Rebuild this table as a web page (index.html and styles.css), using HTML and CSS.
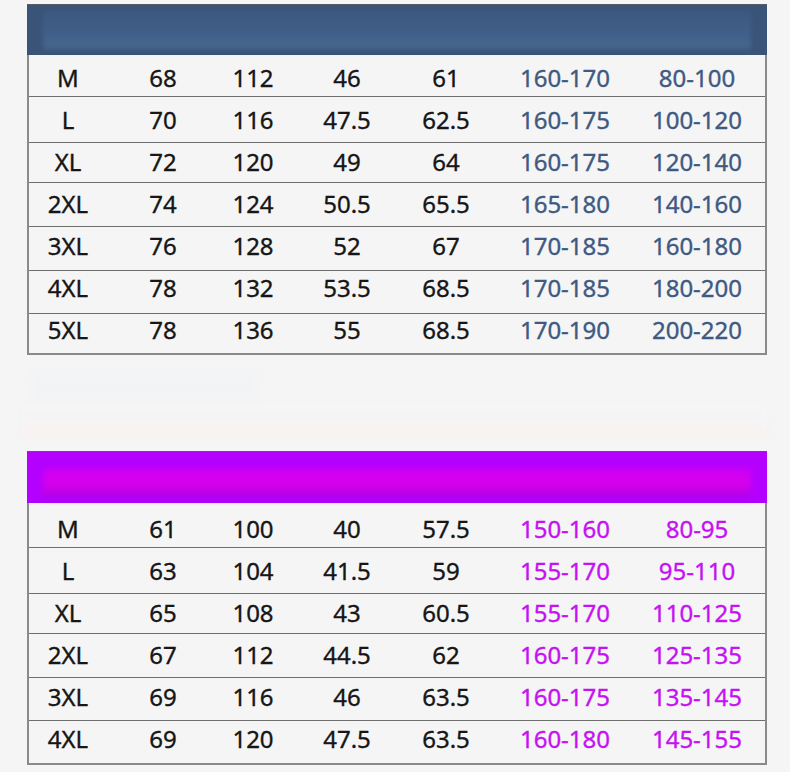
FILE: index.html
```html
<!DOCTYPE html>
<html lang="zh">
<head>
<meta charset="utf-8">
<title>Size chart</title>
<link rel="stylesheet" href="styles.css">
</head>
<body>
<main class="page">
  <section class="chart chart-blue">
    <div class="chart-head"><div class="glow"></div></div>
    <div class="rows">
      <div class="row"><span>M</span><span>68</span><span>112</span><span>46</span><span>61</span><span class="hl">160-170</span><span class="hl">80-100</span></div>
      <div class="row"><span>L</span><span>70</span><span>116</span><span>47.5</span><span>62.5</span><span class="hl">160-175</span><span class="hl">100-120</span></div>
      <div class="row"><span>XL</span><span>72</span><span>120</span><span>49</span><span>64</span><span class="hl">160-175</span><span class="hl">120-140</span></div>
      <div class="row"><span>2XL</span><span>74</span><span>124</span><span>50.5</span><span>65.5</span><span class="hl">165-180</span><span class="hl">140-160</span></div>
      <div class="row"><span>3XL</span><span>76</span><span>128</span><span>52</span><span>67</span><span class="hl">170-185</span><span class="hl">160-180</span></div>
      <div class="row"><span>4XL</span><span>78</span><span>132</span><span>53.5</span><span>68.5</span><span class="hl">170-185</span><span class="hl">180-200</span></div>
      <div class="row"><span>5XL</span><span>78</span><span>136</span><span>55</span><span>68.5</span><span class="hl">170-190</span><span class="hl">200-220</span></div>
    </div>
  </section>

  <div class="ghost">
    <div class="ghost-box"></div>
    <div class="ghost-band"></div>
  </div>

  <section class="chart chart-violet">
    <div class="chart-head"><div class="glow"></div></div>
    <div class="rows">
      <div class="row"><span>M</span><span>61</span><span>100</span><span>40</span><span>57.5</span><span class="hl">150-160</span><span class="hl">80-95</span></div>
      <div class="row"><span>L</span><span>63</span><span>104</span><span>41.5</span><span>59</span><span class="hl">155-170</span><span class="hl">95-110</span></div>
      <div class="row"><span>XL</span><span>65</span><span>108</span><span>43</span><span>60.5</span><span class="hl">155-170</span><span class="hl">110-125</span></div>
      <div class="row"><span>2XL</span><span>67</span><span>112</span><span>44.5</span><span>62</span><span class="hl">160-175</span><span class="hl">125-135</span></div>
      <div class="row"><span>3XL</span><span>69</span><span>116</span><span>46</span><span>63.5</span><span class="hl">160-175</span><span class="hl">135-145</span></div>
      <div class="row"><span>4XL</span><span>69</span><span>120</span><span>47.5</span><span>63.5</span><span class="hl">160-180</span><span class="hl">145-155</span></div>
    </div>
  </section>
</main>
</body>
</html>
```

FILE: styles.css
```css
html, body {
  margin: 0;
  padding: 0;
  background: #f5f5f5;
}

body {
  width: 790px;
  height: 772px;
  overflow: hidden;
  font-family: "Noto Sans", "Open Sans", "Noto Sans CJK SC", sans-serif;
  color: #161616;
}

.page {
  display: flex;
  flex-direction: column;
  padding: 4px 0 0 27px;
}

.chart {
  width: 740px;
  display: flex;
  flex-direction: column;
}

.chart-head {
  height: 51px;
  box-sizing: border-box;
  border-top: 1px solid #5a5a66;
  padding: 6px 16px 5px 16px;
  display: flex;
}

.glow {
  flex: 1;
  border-radius: 2px;
  filter: blur(2px);
}

.chart-blue .chart-head {
  background: #3a5479;
}

.chart-blue .glow {
  background: linear-gradient(180deg, #3c5980 0%, #40608a 60%, #47678d 90%, #3e5c83 100%);
}

.chart-violet .chart-head {
  height: 52px;
  background: #b400ff;
}

.chart-violet .glow {
  margin-top: 10px;
  background: linear-gradient(180deg, #c800f6 0%, #d800ee 35%, #d000e8 65%, #a400e8 100%);
  filter: blur(3px);
}

.rows {
  display: grid;
  border: 2px solid #8a8a8a;
  border-top: 0;
  background: #f5f5f5;
}

.chart-blue .rows {
  grid-template-rows: 42px 46px 40px 44px 44px 43px 39px;
}

.chart-violet .rows {
  grid-template-rows: 45px 46px 40px 44px 43px 42px;
}

.row {
  display: grid;
  grid-template-columns: 78px 112px 68px 120px 78px 160px 104px 1fr;
  align-items: center;
  box-sizing: border-box;
  border-bottom: 1px solid #6e6e6e;
  font-size: 24px;
  line-height: 1;
  -webkit-text-stroke: 0.35px currentColor;
}

.row:last-child {
  border-bottom: 0;
}

.row span {
  text-align: center;
  white-space: nowrap;
}

/* fine vertical placement of the text within the uneven rows */
.chart-blue .row:nth-child(1) { padding-top: 4px; }
.chart-blue .row:nth-child(3) { padding-bottom: 2px; }
.chart-blue .row:nth-child(4) { padding-bottom: 2px; }
.chart-blue .row:nth-child(5) { padding-bottom: 6px; }
.chart-blue .row:nth-child(6) { padding-bottom: 9px; }
.chart-blue .row:nth-child(7) { padding-bottom: 7px; }

.chart-violet .row:nth-child(1) { padding-top: 7px; }
.chart-violet .row:nth-child(3) { padding-bottom: 2px; }
.chart-violet .row:nth-child(4) { padding-bottom: 2px; }
.chart-violet .row:nth-child(5) { padding-bottom: 5px; }
.chart-violet .row:nth-child(6) { padding-bottom: 6px; }

.chart-blue .hl {
  color: #3e5a82;
}

.chart-violet .hl {
  color: #c612f2;
}

.ghost {
  height: 96px;
  display: flex;
  flex-direction: column;
  margin-left: -5px;
  padding-top: 18px;
  box-sizing: border-box;
}

.ghost-box {
  width: 222px;
  height: 29px;
  margin-left: 11px;
  background: #f2f3f5;
  filter: blur(3px);
}

.ghost-band {
  width: 744px;
  height: 32px;
  margin-top: 3px;
  background: linear-gradient(180deg, #f5f5f6 0%, #f6f4f4 60%, #faf0ef 100%);
  filter: blur(2px);
}
```
